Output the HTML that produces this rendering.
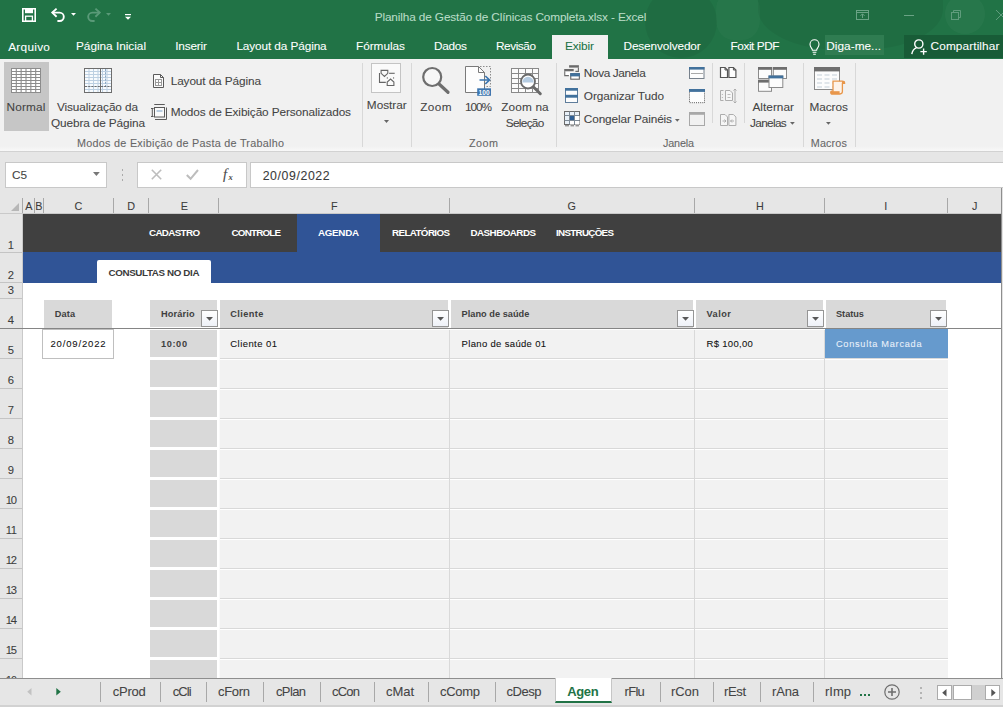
<!DOCTYPE html>
<html><head><meta charset="utf-8"><title>Excel</title>
<style>
*{box-sizing:border-box;margin:0;padding:0}
html,body{width:1003px;height:707px;overflow:hidden;background:#fff}
body{font-family:"Liberation Sans",sans-serif;position:relative;font-size:12px;color:#333}
.a{position:absolute}
.t{position:absolute;white-space:pre;line-height:1;-webkit-text-stroke:0.08px currentColor}
svg{position:absolute;overflow:visible}
.sep{width:1px;background:#d8d8d8;top:63px;height:84px}

</style></head><body>
<!-- ===== title + tab row ===== -->
<div class="a" style="left:0;top:0;width:1003px;height:59px;background:#217346;overflow:hidden">
  <div class="a" style="left:645px;top:-14px;width:72px;height:72px;border-radius:50%;background:rgba(0,0,0,.055)"></div>
  <div class="a" style="left:758px;top:-40px;width:185px;height:90px;border-radius:45%;background:rgba(0,0,0,.05)"></div>
  <div class="a" style="left:716px;top:-10px;width:44px;height:50px;border-radius:40%;background:rgba(255,255,255,.025)"></div>
  <div class="a" style="left:945px;top:-6px;width:40px;height:40px;border-radius:50%;background:rgba(255,255,255,.03)"></div>
</div>
<div class="a" style="left:552px;top:35px;width:56px;height:25px;background:#f1f1f1"></div>
<div class="a" style="left:824.5px;top:35px;width:59.5px;height:20px;background:#2f7c51"></div>
<div class="a" style="left:904px;top:35px;width:99px;height:23px;background:#185c37"></div>
<!-- QAT: save -->
<svg style="left:22px;top:8px" width="14" height="14" viewBox="0 0 14 14"><path d="M0.8 0.8H13.2V13.2H0.8Z" fill="none" stroke="#fff" stroke-width="1.6"/><rect x="3" y="1" width="8" height="4.2" fill="#fff"/><rect x="3.6" y="8.2" width="6.8" height="5" fill="none" stroke="#fff" stroke-width="1.3"/></svg>
<!-- undo -->
<svg style="left:51px;top:8px" width="15" height="14" viewBox="0 0 15 14"><path d="M1.2 4.6H8.6A4.2 4.2 0 0 1 8.6 13H6.4" fill="none" stroke="#fff" stroke-width="1.9"/><path d="M5.6 0.6L1.3 4.6L5.6 8.7" fill="none" stroke="#fff" stroke-width="1.9"/></svg>
<svg style="left:71px;top:13px" width="5" height="3"><path d="M0 0H5L2.5 2.8Z" fill="#fff"/></svg>
<!-- redo (dim) -->
<svg style="left:85.5px;top:8px" width="15" height="14" viewBox="0 0 15 14"><path d="M13.8 4.6H6.4A4.2 4.2 0 0 0 6.4 13H8.6" fill="none" stroke="#5a9a78" stroke-width="1.9"/><path d="M9.4 0.6L13.7 4.6L9.4 8.7" fill="none" stroke="#5a9a78" stroke-width="1.9"/></svg>
<svg style="left:106px;top:13px" width="5" height="3"><path d="M0 0H5L2.5 2.8Z" fill="#5a9a78"/></svg>
<!-- customize -->
<svg style="left:124.5px;top:14px" width="6" height="6"><rect x="0" y="0" width="6" height="1.2" fill="#fff"/><path d="M0 2.8H6L3 5.8Z" fill="#fff"/></svg>
<!-- window controls -->
<svg style="left:856px;top:10px" width="13" height="10" viewBox="0 0 13 10"><rect x="0.5" y="0.5" width="12" height="9" fill="none" stroke="#6aa385" stroke-width="1"/><path d="M0.5 2.5H12.5" stroke="#6aa385"/><path d="M6.5 8V4M4.5 5.8L6.5 3.8L8.5 5.8" fill="none" stroke="#6aa385"/></svg>
<div class="a" style="left:904px;top:14.5px;width:10px;height:1px;background:#6aa385"></div>
<svg style="left:950.5px;top:10px" width="10" height="10" viewBox="0 0 10 10"><rect x="0.5" y="2.5" width="7" height="7" fill="none" stroke="#5f9c7c"/><path d="M2.5 2.5V0.5H9.5V7.5H7.5" fill="none" stroke="#5f9c7c"/></svg>
<svg style="left:996px;top:10px" width="10" height="10" viewBox="0 0 10 10"><path d="M0 0L10 10M10 0L0 10" stroke="#5f9c7c"/></svg>
<!-- bulb -->
<svg style="left:809px;top:38.5px" width="11" height="16" viewBox="0 0 11 16"><path d="M3.4 11.2C3.4 9.4 1 8.4 1 5.3A4.5 4.5 0 0 1 10 5.3C10 8.4 7.6 9.4 7.6 11.2Z" fill="none" stroke="#fff" stroke-width="1.1"/><path d="M3.6 13.2H7.4M4.2 15.2H6.8" stroke="#fff" stroke-width="1.1"/></svg>
<!-- share person -->
<svg style="left:910.5px;top:39px" width="17" height="16" viewBox="0 0 17 16"><circle cx="7.8" cy="5" r="4.1" fill="none" stroke="#fff" stroke-width="1.4"/><path d="M0.8 15.2C1.4 11.4 3.6 9.6 5.4 8.9" fill="none" stroke="#fff" stroke-width="1.4"/><path d="M12.6 9.4V15.8M9.4 12.6H15.8" stroke="#fff" stroke-width="1.4"/></svg>

<!-- ===== ribbon ===== -->
<div class="a" style="left:0;top:59px;width:1003px;height:92px;background:#f1f1f1"></div>
<div class="a" style="left:0;top:146px;width:1003px;height:5px;background:linear-gradient(#f1f1f1,#f8f8f8)"></div>
<div class="a" style="left:0;top:151px;width:1003px;height:1px;background:#d2d2d2"></div>
<div class="a" style="left:0;top:152px;width:1003px;height:45px;background:#e6e6e6"></div>
<div class="a" style="left:4px;top:62px;width:45px;height:69px;background:#c6c6c6"></div>
<!-- separators -->
<div class="a sep" style="left:362px"></div>
<div class="a sep" style="left:411px"></div>
<div class="a sep" style="left:556px"></div>
<div class="a sep" style="left:712px;height:60px"></div>
<div class="a sep" style="left:744px;height:60px"></div>
<div class="a sep" style="left:803px"></div>
<div class="a sep" style="left:855px"></div>
<!-- ===== formula bar ===== -->
<div class="a" style="left:5px;top:162px;width:102px;height:26px;background:#fff;border:1px solid #c8c8c8"></div>
<div class="a" style="left:137px;top:162px;width:110px;height:26px;background:#fff;border:1px solid #c8c8c8"></div>
<div class="a" style="left:250px;top:162px;width:760px;height:26px;background:#fff;border:1px solid #c8c8c8"></div>
<svg style="left:11px;top:68px" width="30" height="25" viewBox="0 0 30 25"><rect x="0" y="0" width="30" height="25" fill="#8c8c8c"/><rect x="1.00" y="1.00" width="3.75" height="2.0" fill="#fff"/><rect x="5.85" y="1.00" width="3.75" height="2.0" fill="#fff"/><rect x="10.70" y="1.00" width="3.75" height="2.0" fill="#fff"/><rect x="15.55" y="1.00" width="3.75" height="2.0" fill="#fff"/><rect x="20.40" y="1.00" width="3.75" height="2.0" fill="#fff"/><rect x="25.25" y="1.00" width="3.75" height="2.0" fill="#fff"/><rect x="1.00" y="4.00" width="3.75" height="2.0" fill="#fff"/><rect x="5.85" y="4.00" width="3.75" height="2.0" fill="#fff"/><rect x="10.70" y="4.00" width="3.75" height="2.0" fill="#fff"/><rect x="15.55" y="4.00" width="3.75" height="2.0" fill="#fff"/><rect x="20.40" y="4.00" width="3.75" height="2.0" fill="#fff"/><rect x="25.25" y="4.00" width="3.75" height="2.0" fill="#fff"/><rect x="1.00" y="7.00" width="3.75" height="2.0" fill="#fff"/><rect x="5.85" y="7.00" width="3.75" height="2.0" fill="#fff"/><rect x="10.70" y="7.00" width="3.75" height="2.0" fill="#fff"/><rect x="15.55" y="7.00" width="3.75" height="2.0" fill="#fff"/><rect x="20.40" y="7.00" width="3.75" height="2.0" fill="#fff"/><rect x="25.25" y="7.00" width="3.75" height="2.0" fill="#fff"/><rect x="1.00" y="10.00" width="3.75" height="2.0" fill="#fff"/><rect x="5.85" y="10.00" width="3.75" height="2.0" fill="#fff"/><rect x="10.70" y="10.00" width="3.75" height="2.0" fill="#fff"/><rect x="15.55" y="10.00" width="3.75" height="2.0" fill="#fff"/><rect x="20.40" y="10.00" width="3.75" height="2.0" fill="#fff"/><rect x="25.25" y="10.00" width="3.75" height="2.0" fill="#fff"/><rect x="1.00" y="13.00" width="3.75" height="2.0" fill="#fff"/><rect x="5.85" y="13.00" width="3.75" height="2.0" fill="#fff"/><rect x="10.70" y="13.00" width="3.75" height="2.0" fill="#fff"/><rect x="15.55" y="13.00" width="3.75" height="2.0" fill="#fff"/><rect x="20.40" y="13.00" width="3.75" height="2.0" fill="#fff"/><rect x="25.25" y="13.00" width="3.75" height="2.0" fill="#fff"/><rect x="1.00" y="16.00" width="3.75" height="2.0" fill="#fff"/><rect x="5.85" y="16.00" width="3.75" height="2.0" fill="#fff"/><rect x="10.70" y="16.00" width="3.75" height="2.0" fill="#fff"/><rect x="15.55" y="16.00" width="3.75" height="2.0" fill="#fff"/><rect x="20.40" y="16.00" width="3.75" height="2.0" fill="#fff"/><rect x="25.25" y="16.00" width="3.75" height="2.0" fill="#fff"/><rect x="1.00" y="19.00" width="3.75" height="2.0" fill="#fff"/><rect x="5.85" y="19.00" width="3.75" height="2.0" fill="#fff"/><rect x="10.70" y="19.00" width="3.75" height="2.0" fill="#fff"/><rect x="15.55" y="19.00" width="3.75" height="2.0" fill="#fff"/><rect x="20.40" y="19.00" width="3.75" height="2.0" fill="#fff"/><rect x="25.25" y="19.00" width="3.75" height="2.0" fill="#fff"/><rect x="1.00" y="22.00" width="3.75" height="2.0" fill="#fff"/><rect x="5.85" y="22.00" width="3.75" height="2.0" fill="#fff"/><rect x="10.70" y="22.00" width="3.75" height="2.0" fill="#fff"/><rect x="15.55" y="22.00" width="3.75" height="2.0" fill="#fff"/><rect x="20.40" y="22.00" width="3.75" height="2.0" fill="#fff"/><rect x="25.25" y="22.00" width="3.75" height="2.0" fill="#fff"/></svg>
<svg style="left:84px;top:68px" width="28" height="25" viewBox="0 0 28 25"><rect x="0.5" y="0.5" width="27" height="24" fill="#f8fbfe" stroke="#6d6d6d"/><path d="M5.00 1V24" stroke="#bdd0e2" stroke-width="1"/><path d="M9.50 1V24" stroke="#bdd0e2" stroke-width="1"/><path d="M14.00 1V24" stroke="#bdd0e2" stroke-width="1"/><path d="M18.50 1V24" stroke="#bdd0e2" stroke-width="1"/><path d="M23.00 1V24" stroke="#bdd0e2" stroke-width="1"/><path d="M1 3.50H27" stroke="#bdd0e2" stroke-width="1"/><path d="M1 6.50H27" stroke="#bdd0e2" stroke-width="1"/><path d="M1 9.50H27" stroke="#bdd0e2" stroke-width="1"/><path d="M1 12.50H27" stroke="#bdd0e2" stroke-width="1"/><path d="M1 15.50H27" stroke="#bdd0e2" stroke-width="1"/><path d="M1 18.50H27" stroke="#bdd0e2" stroke-width="1"/><path d="M1 21.50H27" stroke="#bdd0e2" stroke-width="1"/><path d="M16.5 1V24" stroke="#6d6d6d"/><path d="M1 18.5H27" stroke="#6d6d6d" stroke-dasharray="2 1.2"/><path d="M21.5 1V18" stroke="#8aa8c6" stroke-dasharray="2 1.2"/></svg>
<svg style="left:153px;top:74px" width="11" height="14" viewBox="0 0 11 14"><path d="M0.5 0.5H7.5L10.5 3.5V13.5H0.5Z" fill="#fafafa" stroke="#5a5a5a"/><path d="M7.5 0.5V3.5H10.5" fill="none" stroke="#5a5a5a"/><rect x="2.5" y="5.5" width="6" height="6" fill="#fff" stroke="#9a9a9a"/><path d="M5.5 5.5V11.5M2.5 8.5H8.5" stroke="#9a9a9a"/></svg>
<svg style="left:151px;top:104px" width="16" height="16" viewBox="0 0 16 16"><rect x="3.5" y="3.5" width="10" height="9.5" fill="#fafafa" stroke="#5a5a5a"/><rect x="5.5" y="6" width="6" height="2" fill="#b9cde0"/><path d="M3.5 1V0.5H13.5V1M15.5 3.5V15.5H4" fill="none" stroke="#5a5a5a"/><path d="M0 4.5H2.6M0 12.5H2.6M1.3 4.5V12.5" stroke="#5a5a5a"/></svg>
<div class="a" style="left:371px;top:63px;width:30px;height:30px;background:#fafafa;border:1px solid #c4c4c4"></div>
<svg style="left:378px;top:69px" width="18" height="18" viewBox="0 0 18 18"><path d="M3.1 1.4H9.8V4.3L6.45 7.5L3.1 4.3Z" fill="none" stroke="#666" stroke-width="1.1"/><path d="M11.1 4.3H16.7" stroke="#666" stroke-width="1.1"/><path d="M1.5 4.1V13.4H7.8" fill="none" stroke="#666" stroke-width="1.1"/><path d="M9.2 16.5V13.1L12.55 10.1L15.9 13.1V16.5Z" fill="none" stroke="#666" stroke-width="1.1"/><rect x="8.8" y="8.3" width="1" height="1.3" fill="#666"/><rect x="15.1" y="8.3" width="1" height="1.3" fill="#666"/></svg>
<svg style="left:384px;top:120px" width="5" height="3" viewBox="0 0 5 3"><path d="M0 0H5L2.5 2.9Z" fill="#666"/></svg>
<svg style="left:421px;top:66px" width="30" height="30" viewBox="0 0 30 30"><circle cx="11.2" cy="11" r="9" fill="#f7f7f7" stroke="#6e6e6e" stroke-width="2.2"/><path d="M18.3 18.3L27 26.3" stroke="#6e6e6e" stroke-width="3.2" stroke-linecap="round"/></svg>
<svg style="left:465px;top:66px" width="27" height="31" viewBox="0 0 27 31"><path d="M0.5 0.5H13.5L19.5 6.5V26.5H0.5Z" fill="#fdfdfd" stroke="#7a7a7a"/><path d="M13.5 0.5V6.5H19.5" fill="none" stroke="#7a7a7a"/><path d="M15 0.5H25.5V20.5H20" fill="none" stroke="#8c8c8c" stroke-dasharray="1.5 1.5"/><path d="M14.5 14H24M20.3 10L24.5 14L20.3 18" fill="none" stroke="#3a75b0" stroke-width="1.7"/><path d="M19.5 21V23" stroke="#3a75b0" stroke-dasharray="1 1"/><rect x="12.2" y="22.3" width="13.8" height="7.5" fill="#3e75ae"/><text x="19.1" y="28.6" font-family="Liberation Sans,sans-serif" font-weight="bold" font-size="6.6" fill="#fff" text-anchor="middle">100</text></svg>
<svg style="left:511px;top:68px" width="31" height="28" viewBox="0 0 31 28"><rect x="0.5" y="0.5" width="27" height="24" fill="#fcfcfc" stroke="#8a8a8a"/><path d="M7.5 1V24" stroke="#8a8a8a"/><path d="M14.5 1V24" stroke="#8a8a8a"/><path d="M21.5 1V24" stroke="#8a8a8a"/><path d="M1 5.5H27" stroke="#8a8a8a"/><path d="M1 10.5H27" stroke="#8a8a8a"/><path d="M1 15.5H27" stroke="#8a8a8a"/><path d="M1 20.5H27" stroke="#8a8a8a"/><circle cx="17" cy="13.5" r="7" fill="#fff" stroke="#6a6a6a" stroke-width="1.8"/><path d="M11.3 14.5A5.7 5.7 0 0 1 22.7 14.5Z" fill="#b5cce2"/><path d="M22.5 19L29.3 25.7" stroke="#6a6a6a" stroke-width="3" stroke-linecap="round"/></svg>
<svg style="left:564px;top:65px" width="16" height="15" viewBox="0 0 16 15"><rect x="5.1" y="0.2" width="9.8" height="2.4" fill="#6b6b6b"/><path d="M14.4 2.6V6.4H11.4" fill="none" stroke="#6b6b6b" stroke-width="1.1"/><rect x="0.7" y="5" width="8.8" height="5.6" fill="#fff"/><rect x="0.2" y="4" width="9.5" height="2.3" fill="#6b6b6b"/><path d="M0.75 6.3V10.6H4.9" fill="none" stroke="#6b6b6b" stroke-width="1.1"/><rect x="6.75" y="8.7" width="8.6" height="5.5" fill="#fff" stroke="#666" stroke-width="1.1"/><rect x="6.2" y="8.1" width="9.7" height="3.3" fill="#41719c"/></svg>
<svg style="left:565px;top:88px" width="13" height="15" viewBox="0 0 13 15"><rect x="0.5" y="0.5" width="12" height="14" fill="#fdfdfd" stroke="#5f7d9b"/><rect x="0" y="0" width="13" height="2.7" fill="#41719c"/><rect x="0" y="6.8" width="13" height="2.9" fill="#41719c"/></svg>
<svg style="left:564px;top:111px" width="16" height="16" viewBox="0 0 16 16"><rect x="0.5" y="0.5" width="15" height="13" fill="#e8f0f8" stroke="#6b6b6b"/><path d="M5.5 0.5V13.5M10.5 0.5V13.5M0.5 4.5H15.5M0.5 9.5H15.5" stroke="#7d8a96"/><rect x="6" y="5" width="4" height="4" fill="#2f5f95"/><rect x="11" y="5" width="4.5" height="4" fill="#fff"/><rect x="6" y="10" width="4" height="3.5" fill="#fff"/><rect x="11" y="10" width="4.5" height="3.5" fill="#fff"/><path d="M1 14.8H5M6.5 14.8H10M11.5 14.8H15" stroke="#6b6b6b"/></svg>
<svg style="left:674.5px;top:118.7px" width="5" height="3" viewBox="0 0 5 3"><path d="M0 0H4.6L2.3 2.7Z" fill="#666"/></svg>
<svg style="left:689px;top:67px" width="16" height="12" viewBox="0 0 16 12"><rect x="0.5" y="0.5" width="14.5" height="11" fill="#fdfdfd" stroke="#77818c"/><rect x="0" y="0" width="15.5" height="2.6" fill="#41719c"/><path d="M2.5 6.5H13.5" stroke="#555" stroke-dasharray="1 1"/></svg>
<svg style="left:689px;top:89px" width="17" height="15" viewBox="0 0 17 15"><rect x="0.5" y="0.5" width="15" height="13.2" fill="#fdfdfd" stroke="#555" stroke-dasharray="1 1.1"/><rect x="0" y="0" width="16" height="2.9" fill="#41719c"/></svg>
<svg style="left:689px;top:112px" width="17" height="14" viewBox="0 0 17 14"><rect x="0.5" y="0.5" width="15" height="13" fill="#f1f1f1" stroke="#a8a8a8"/><rect x="0" y="0" width="16" height="2.8" fill="#a8a8a8"/></svg>
<svg style="left:720px;top:67px" width="17" height="11" viewBox="0 0 17 11"><path d="M0.5 0.5H5L7.5 3V10.5H0.5Z" fill="#fdfdfd" stroke="#555" stroke-width="1.2"/><path d="M5 0.5V3H7.5" fill="none" stroke="#555"/><path d="M8.9 0.5H13.4L15.9 3V10.5H8.9Z" fill="#fdfdfd" stroke="#555" stroke-width="1.2"/><path d="M13.4 0.5V3H15.9" fill="none" stroke="#555"/></svg>
<svg style="left:720px;top:88px" width="18" height="16" viewBox="0 0 18 16"><path d="M3.5 2.5H0.5V12.5H3.5" fill="none" stroke="#adadad"/><path d="M5.5 2.5H10L12.5 5V12.5H5.5Z" fill="#f6f6f6" stroke="#adadad"/><path d="M7.5 6.5H10.5M7.5 9.5H10.5M1.8 6.5H3M1.8 9.5H3" stroke="#bcbcbc"/><path d="M15 1V15M13.5 2.5L15 1L16.5 2.5M13.5 13.5L15 15L16.5 13.5" fill="none" stroke="#adadad"/></svg>
<svg style="left:720px;top:114px" width="17" height="12" viewBox="0 0 17 12"><path d="M0.5 0.5H5L7.5 3V11.5H0.5Z" fill="#f6f6f6" stroke="#adadad"/><path d="M8.9 0.5H13.4L15.9 3V11.5H8.9Z" fill="#f6f6f6" stroke="#adadad"/><path d="M2.5 7H6M4.5 5.5L6 7L4.5 8.5M14 7H10.5M12 5.5L10.5 7L12 8.5" fill="none" stroke="#adadad"/></svg>
<svg style="left:758px;top:67px" width="30" height="25" viewBox="0 0 30 25"><rect x="0.5" y="0.5" width="13" height="11" fill="#fcfcfc" stroke="#8a8a8a"/><rect x="0" y="0" width="14" height="2.8" fill="#6e6e6e"/><rect x="15.3" y="0.5" width="13.2" height="11" fill="#fcfcfc" stroke="#8a8a8a"/><rect x="14.8" y="0" width="14.2" height="2.8" fill="#6e6e6e"/><rect x="0.5" y="13.3" width="13" height="11" fill="#fcfcfc" stroke="#8a8a8a"/><rect x="0" y="12.8" width="14" height="2.8" fill="#6e6e6e"/><rect x="11" y="9" width="13.8" height="11.5" fill="#fcfcfc" stroke="#8a8a8a"/><rect x="10.5" y="8.5" width="14.8" height="2.9" fill="#41719c"/></svg>
<svg style="left:790px;top:121.7px" width="5" height="3" viewBox="0 0 5 3"><path d="M0 0H4.8L2.4 2.7Z" fill="#666"/></svg>
<svg style="left:814px;top:67px" width="32" height="28" viewBox="0 0 32 28"><rect x="0.5" y="0.5" width="25" height="22" fill="#fcfcfc" stroke="#8a8a8a"/><rect x="0" y="0" width="26" height="4.4" fill="#6e6e6e"/><path d="M3 8H8M10.5 8H15.5M18 8H23" stroke="#c4cfd8"/><path d="M3 12H8M10.5 12H15.5M18 12H23" stroke="#c4cfd8"/><path d="M3 16H8M10.5 16H15.5M18 16H23" stroke="#c4cfd8"/><path d="M3 20H8M10.5 20H15.5M18 20H23" stroke="#c4cfd8"/><path d="M19 14.2H28.2C30 14.2 30.6 15 30.6 16.4H28.4V24.6C28.4 26.4 27.6 27 26 27H17.6C16.4 27 16.4 24.2 17.6 24.2H19Z" fill="#fdf3ea" stroke="#e8964a" stroke-width="1.3"/><rect x="17" y="24.2" width="8.6" height="2.9" fill="#e8964a"/><rect x="28" y="14.2" width="2.6" height="2.2" fill="#e8964a"/></svg>
<svg style="left:826px;top:122px" width="5" height="3" viewBox="0 0 5 3"><path d="M0 0H4.8L2.4 2.7Z" fill="#666"/></svg>
<svg style="left:93px;top:172px" width="7" height="4" viewBox="0 0 7 4"><path d="M0 0H6.8L3.4 3.9Z" fill="#777"/></svg>
<div class="a" style="left:121.5px;top:169px;width:1.6px;height:1.6px;background:#aaa"></div>
<div class="a" style="left:121.5px;top:174px;width:1.6px;height:1.6px;background:#aaa"></div>
<div class="a" style="left:121.5px;top:179px;width:1.6px;height:1.6px;background:#aaa"></div>
<svg style="left:151px;top:169px" width="11" height="11" viewBox="0 0 11 11"><path d="M0.8 0.8L10.2 10.2M10.2 0.8L0.8 10.2" stroke="#bdbdbd" stroke-width="1.6"/></svg>
<svg style="left:186px;top:169px" width="13" height="11" viewBox="0 0 13 11"><path d="M0.8 6L4.6 9.8L12 1" fill="none" stroke="#bdbdbd" stroke-width="2"/></svg>
<!-- ===== grid ===== -->
<div class="a" style="left:0px;top:197px;width:1003px;height:17px;background:#e6e6e6;"></div>
<div class="a" style="left:0px;top:197px;width:22px;height:481px;background:#e6e6e6;"></div>
<div class="a" style="left:22px;top:198px;width:1px;height:15px;background:#a8a8a8;"></div>
<div class="a" style="left:34px;top:198px;width:1px;height:15px;background:#a8a8a8;"></div>
<div class="a" style="left:43px;top:198px;width:1px;height:15px;background:#a8a8a8;"></div>
<div class="a" style="left:113px;top:198px;width:1px;height:15px;background:#a8a8a8;"></div>
<div class="a" style="left:148px;top:198px;width:1px;height:15px;background:#a8a8a8;"></div>
<div class="a" style="left:218px;top:198px;width:1px;height:15px;background:#a8a8a8;"></div>
<div class="a" style="left:449px;top:198px;width:1px;height:15px;background:#a8a8a8;"></div>
<div class="a" style="left:694px;top:198px;width:1px;height:15px;background:#a8a8a8;"></div>
<div class="a" style="left:824px;top:198px;width:1px;height:15px;background:#a8a8a8;"></div>
<div class="a" style="left:947px;top:198px;width:1px;height:15px;background:#a8a8a8;"></div>
<div class="a" style="left:22px;top:213px;width:981px;height:1px;background:#c9c9c9;"></div>
<div class="a" style="left:22px;top:214px;width:1px;height:464px;background:#c9c9c9;"></div>
<div class="a" style="left:0px;top:213px;width:22px;height:1px;background:#c9c9c9;"></div>
<div class="a" style="left:0px;top:252px;width:22px;height:1px;background:#c4c4c4;"></div>
<div class="a" style="left:0px;top:282px;width:22px;height:1px;background:#c4c4c4;"></div>
<div class="a" style="left:0px;top:298px;width:22px;height:1px;background:#c4c4c4;"></div>
<div class="a" style="left:0px;top:358px;width:22px;height:1px;background:#c4c4c4;"></div>
<div class="a" style="left:0px;top:388px;width:22px;height:1px;background:#c4c4c4;"></div>
<div class="a" style="left:0px;top:418px;width:22px;height:1px;background:#c4c4c4;"></div>
<div class="a" style="left:0px;top:448px;width:22px;height:1px;background:#c4c4c4;"></div>
<div class="a" style="left:0px;top:478px;width:22px;height:1px;background:#c4c4c4;"></div>
<div class="a" style="left:0px;top:508px;width:22px;height:1px;background:#c4c4c4;"></div>
<div class="a" style="left:0px;top:538px;width:22px;height:1px;background:#c4c4c4;"></div>
<div class="a" style="left:0px;top:568px;width:22px;height:1px;background:#c4c4c4;"></div>
<div class="a" style="left:0px;top:598px;width:22px;height:1px;background:#c4c4c4;"></div>
<div class="a" style="left:0px;top:628px;width:22px;height:1px;background:#c4c4c4;"></div>
<div class="a" style="left:0px;top:658px;width:22px;height:1px;background:#c4c4c4;"></div>
<div class="a" style="left:0px;top:688px;width:22px;height:1px;background:#c4c4c4;"></div>
<svg style="left:11px;top:202.5px" width="8" height="8"><path d="M8 0V8H0Z" fill="#b7b7b7"/></svg>
<div class="a" style="left:23px;top:214px;width:978px;height:38px;background:#404040;"></div>
<div class="a" style="left:297px;top:214px;width:83px;height:38px;background:#305496;"></div>
<div class="a" style="left:23px;top:252px;width:978px;height:31px;background:#305496;"></div>
<div class="a" style="left:97px;top:260px;width:114px;height:23px;background:#fff;border-radius:2px 2px 0 0"></div>
<div class="a" style="left:1001px;top:188px;width:1px;height:490px;background:#8e8e8e;"></div>
<div class="a" style="left:1002px;top:188px;width:1px;height:490px;background:#e2e2e2;"></div>
<div class="a" style="left:44px;top:300px;width:68px;height:28px;background:#d9d9d9;"></div>
<div class="a" style="left:150px;top:300px;width:67px;height:27px;background:#d9d9d9;"></div>
<div class="a" style="left:220px;top:300px;width:228px;height:28px;background:#d9d9d9;"></div>
<div class="a" style="left:451px;top:300px;width:242px;height:28px;background:#d9d9d9;"></div>
<div class="a" style="left:696px;top:300px;width:127px;height:28px;background:#d9d9d9;"></div>
<div class="a" style="left:826px;top:300px;width:120px;height:28px;background:#d9d9d9;"></div>
<div class="a" style="left:150px;top:330px;width:67px;height:27px;background:#d9d9d9;"></div>
<div class="a" style="left:219px;top:330px;width:729px;height:29px;background:#f2f2f2;border-bottom:1px solid #d9d9d9"></div>
<div class="a" style="left:150px;top:360px;width:67px;height:27px;background:#d9d9d9;"></div>
<div class="a" style="left:219px;top:360px;width:729px;height:29px;background:#f2f2f2;border-bottom:1px solid #d9d9d9"></div>
<div class="a" style="left:150px;top:390px;width:67px;height:27px;background:#d9d9d9;"></div>
<div class="a" style="left:219px;top:390px;width:729px;height:29px;background:#f2f2f2;border-bottom:1px solid #d9d9d9"></div>
<div class="a" style="left:150px;top:420px;width:67px;height:27px;background:#d9d9d9;"></div>
<div class="a" style="left:219px;top:420px;width:729px;height:29px;background:#f2f2f2;border-bottom:1px solid #d9d9d9"></div>
<div class="a" style="left:150px;top:450px;width:67px;height:27px;background:#d9d9d9;"></div>
<div class="a" style="left:219px;top:450px;width:729px;height:29px;background:#f2f2f2;border-bottom:1px solid #d9d9d9"></div>
<div class="a" style="left:150px;top:480px;width:67px;height:27px;background:#d9d9d9;"></div>
<div class="a" style="left:219px;top:480px;width:729px;height:29px;background:#f2f2f2;border-bottom:1px solid #d9d9d9"></div>
<div class="a" style="left:150px;top:510px;width:67px;height:27px;background:#d9d9d9;"></div>
<div class="a" style="left:219px;top:510px;width:729px;height:29px;background:#f2f2f2;border-bottom:1px solid #d9d9d9"></div>
<div class="a" style="left:150px;top:540px;width:67px;height:27px;background:#d9d9d9;"></div>
<div class="a" style="left:219px;top:540px;width:729px;height:29px;background:#f2f2f2;border-bottom:1px solid #d9d9d9"></div>
<div class="a" style="left:150px;top:570px;width:67px;height:27px;background:#d9d9d9;"></div>
<div class="a" style="left:219px;top:570px;width:729px;height:29px;background:#f2f2f2;border-bottom:1px solid #d9d9d9"></div>
<div class="a" style="left:150px;top:600px;width:67px;height:27px;background:#d9d9d9;"></div>
<div class="a" style="left:219px;top:600px;width:729px;height:29px;background:#f2f2f2;border-bottom:1px solid #d9d9d9"></div>
<div class="a" style="left:150px;top:630px;width:67px;height:27px;background:#d9d9d9;"></div>
<div class="a" style="left:219px;top:630px;width:729px;height:29px;background:#f2f2f2;border-bottom:1px solid #d9d9d9"></div>
<div class="a" style="left:150px;top:660px;width:67px;height:27px;background:#d9d9d9;"></div>
<div class="a" style="left:219px;top:660px;width:729px;height:29px;background:#f2f2f2;border-bottom:1px solid #d9d9d9"></div>
<div class="a" style="left:449px;top:330px;width:1px;height:348px;background:#d9d9d9;"></div>
<div class="a" style="left:694px;top:330px;width:1px;height:348px;background:#d9d9d9;"></div>
<div class="a" style="left:824px;top:330px;width:1px;height:348px;background:#d9d9d9;"></div>
<div class="a" style="left:219px;top:330px;width:1px;height:348px;background:#fafafa;"></div>
<div class="a" style="left:825px;top:328.5px;width:123px;height:29.5px;background:#669acd;"></div>
<div class="a" style="left:42px;top:329px;width:72px;height:30px;background:#fff;border:1px solid #bfbfbf"></div>
<div class="a" style="left:0px;top:328px;width:1001px;height:1px;background:#858585;"></div>
<div class="a" style="left:201px;top:310px;width:17px;height:17px;background:linear-gradient(#fff,#eef1f8);border:1px solid #959595"></div>
<svg style="left:205px;top:317px" width="9" height="5"><path d="M1.1 0.1H8L4.55 3.8Z" fill="#585858"/></svg>
<div class="a" style="left:432px;top:310px;width:17px;height:17px;background:linear-gradient(#fff,#eef1f8);border:1px solid #959595"></div>
<svg style="left:436px;top:317px" width="9" height="5"><path d="M1.1 0.1H8L4.55 3.8Z" fill="#585858"/></svg>
<div class="a" style="left:677px;top:310px;width:17px;height:17px;background:linear-gradient(#fff,#eef1f8);border:1px solid #959595"></div>
<svg style="left:681px;top:317px" width="9" height="5"><path d="M1.1 0.1H8L4.55 3.8Z" fill="#585858"/></svg>
<div class="a" style="left:807px;top:310px;width:17px;height:17px;background:linear-gradient(#fff,#eef1f8);border:1px solid #959595"></div>
<svg style="left:811px;top:317px" width="9" height="5"><path d="M1.1 0.1H8L4.55 3.8Z" fill="#585858"/></svg>
<div class="a" style="left:930px;top:310px;width:17px;height:17px;background:linear-gradient(#fff,#eef1f8);border:1px solid #959595"></div>
<svg style="left:934px;top:317px" width="9" height="5"><path d="M1.1 0.1H8L4.55 3.8Z" fill="#585858"/></svg>
<div class="t" style="left:374.70px;top:12.01px;font-size:11.8px;color:#b9dcc6;letter-spacing:-0.126px">Planilha de Gestão de Clínicas Completa.xlsx - Excel</div>
<div class="t" style="left:8.20px;top:42.31px;font-size:11.8px;color:#ffffff;letter-spacing:0.283px">Arquivo</div>
<div class="t" style="left:76.00px;top:41.41px;font-size:11.8px;color:#ffffff;letter-spacing:-0.013px">Página Inicial</div>
<div class="t" style="left:175.20px;top:41.41px;font-size:11.8px;color:#ffffff;letter-spacing:-0.180px">Inserir</div>
<div class="t" style="left:236.40px;top:41.41px;font-size:11.8px;color:#ffffff;letter-spacing:-0.103px">Layout da Página</div>
<div class="t" style="left:356.00px;top:41.41px;font-size:11.8px;color:#ffffff;letter-spacing:-0.025px">Fórmulas</div>
<div class="t" style="left:434.00px;top:41.41px;font-size:11.8px;color:#ffffff;letter-spacing:-0.277px">Dados</div>
<div class="t" style="left:496.00px;top:41.41px;font-size:11.8px;color:#ffffff;letter-spacing:-0.438px">Revisão</div>
<div class="t" style="left:565.00px;top:41.41px;font-size:11.8px;color:#217346;letter-spacing:-0.100px">Exibir</div>
<div class="t" style="left:623.50px;top:41.41px;font-size:11.8px;color:#ffffff;letter-spacing:-0.125px">Desenvolvedor</div>
<div class="t" style="left:730.60px;top:41.41px;font-size:11.8px;color:#ffffff;letter-spacing:-0.442px">Foxit PDF</div>
<div class="t" style="left:826.30px;top:41.41px;font-size:11.8px;color:#ffffff;letter-spacing:0.031px">Diga-me...</div>
<div class="t" style="left:930.60px;top:41.41px;font-size:11.8px;color:#ffffff;letter-spacing:0.115px">Compartilhar</div>
<div class="t" style="left:6.50px;top:102.41px;font-size:11.8px;color:#444444;letter-spacing:0.194px">Normal</div>
<div class="t" style="left:57.00px;top:102.41px;font-size:11.8px;color:#444444;letter-spacing:-0.102px">Visualização da</div>
<div class="t" style="left:51.00px;top:118.41px;font-size:11.8px;color:#444444;letter-spacing:-0.118px">Quebra de Página</div>
<div class="t" style="left:170.70px;top:76.41px;font-size:11.8px;color:#444444;letter-spacing:-0.103px">Layout da Página</div>
<div class="t" style="left:170.70px;top:107.01px;font-size:11.8px;color:#444444;letter-spacing:-0.107px">Modos de Exibição Personalizados</div>
<div class="t" style="left:77.00px;top:138.46px;font-size:10.8px;color:#666;letter-spacing:0.274px">Modos de Exibição de Pasta de Trabalho</div>
<div class="t" style="left:366.80px;top:100.31px;font-size:11.8px;color:#444444;letter-spacing:0.003px">Mostrar</div>
<div class="t" style="left:420.30px;top:102.41px;font-size:11.8px;color:#444444;letter-spacing:0.348px">Zoom</div>
<div class="t" style="left:465.00px;top:102.41px;font-size:11.8px;color:#444444;letter-spacing:-1.062px">100%</div>
<div class="t" style="left:501.20px;top:102.41px;font-size:11.8px;color:#444444;letter-spacing:0.156px">Zoom na</div>
<div class="t" style="left:505.80px;top:118.21px;font-size:11.8px;color:#444444;letter-spacing:-0.690px">Seleção</div>
<div class="t" style="left:469.00px;top:138.46px;font-size:10.8px;color:#666;letter-spacing:0.464px">Zoom</div>
<div class="t" style="left:583.80px;top:68.41px;font-size:11.8px;color:#444444;letter-spacing:-0.369px">Nova Janela</div>
<div class="t" style="left:583.80px;top:91.41px;font-size:11.8px;color:#444444;letter-spacing:-0.086px">Organizar Tudo</div>
<div class="t" style="left:583.80px;top:114.31px;font-size:11.8px;color:#444444;letter-spacing:-0.110px">Congelar Painéis</div>
<div class="t" style="left:752.40px;top:102.41px;font-size:11.8px;color:#444444;letter-spacing:0.041px">Alternar</div>
<div class="t" style="left:750.00px;top:118.11px;font-size:11.8px;color:#444444;letter-spacing:-0.662px">Janelas</div>
<div class="t" style="left:663.00px;top:138.46px;font-size:10.8px;color:#666;letter-spacing:-0.166px">Janela</div>
<div class="t" style="left:809.60px;top:102.41px;font-size:11.8px;color:#444444;letter-spacing:-0.098px">Macros</div>
<div class="t" style="left:810.80px;top:138.16px;font-size:10.8px;color:#666;letter-spacing:0.119px">Macros</div>
<div class="t" style="left:12.00px;top:170.11px;font-size:11.8px;color:#444;letter-spacing:-0.094px">C5</div>
<div class="t" style="left:262.70px;top:169.99px;font-size:12.3px;color:#3a3a3a;letter-spacing:0.595px">20/09/2022</div>
<div class="t" style="left:222.98px;top:167.47px;font-size:14.5px;color:#4a4a4a;letter-spacing:0.000px;font-style:italic;font-family:'Liberation Serif',serif">f</div>
<div class="t" style="left:228.62px;top:172.94px;font-size:8.5px;color:#4a4a4a;letter-spacing:0.000px;font-weight:bold;-webkit-text-stroke:0;font-style:italic;font-family:'Liberation Serif',serif">x</div>
<div class="t" style="left:25.15px;top:201.06px;font-size:10.8px;color:#3c3c3c;letter-spacing:0.000px">A</div>
<div class="t" style="left:35.15px;top:201.06px;font-size:10.8px;color:#3c3c3c;letter-spacing:0.000px">B</div>
<div class="t" style="left:74.39px;top:201.06px;font-size:10.8px;color:#3c3c3c;letter-spacing:0.000px">C</div>
<div class="t" style="left:127.29px;top:201.06px;font-size:10.8px;color:#3c3c3c;letter-spacing:0.000px">D</div>
<div class="t" style="left:180.75px;top:201.06px;font-size:10.8px;color:#3c3c3c;letter-spacing:0.000px">E</div>
<div class="t" style="left:331.10px;top:201.06px;font-size:10.8px;color:#3c3c3c;letter-spacing:0.000px">F</div>
<div class="t" style="left:567.55px;top:201.06px;font-size:10.8px;color:#3c3c3c;letter-spacing:0.000px">G</div>
<div class="t" style="left:756.09px;top:201.06px;font-size:10.8px;color:#3c3c3c;letter-spacing:0.000px">H</div>
<div class="t" style="left:884.30px;top:201.06px;font-size:10.8px;color:#3c3c3c;letter-spacing:0.000px">I</div>
<div class="t" style="left:971.90px;top:201.06px;font-size:10.8px;color:#3c3c3c;letter-spacing:0.000px">J</div>
<div class="t" style="left:7.68px;top:239.72px;font-size:11.2px;color:#3c3c3c;letter-spacing:0.000px">1</div>
<div class="t" style="left:7.68px;top:269.72px;font-size:11.2px;color:#3c3c3c;letter-spacing:0.000px">2</div>
<div class="t" style="left:7.68px;top:284.92px;font-size:11.2px;color:#3c3c3c;letter-spacing:0.000px">3</div>
<div class="t" style="left:7.68px;top:314.72px;font-size:11.2px;color:#3c3c3c;letter-spacing:0.000px">4</div>
<div class="t" style="left:7.68px;top:344.82px;font-size:11.2px;color:#3c3c3c;letter-spacing:0.000px">5</div>
<div class="t" style="left:7.68px;top:374.82px;font-size:11.2px;color:#3c3c3c;letter-spacing:0.000px">6</div>
<div class="t" style="left:7.68px;top:404.82px;font-size:11.2px;color:#3c3c3c;letter-spacing:0.000px">7</div>
<div class="t" style="left:7.68px;top:434.82px;font-size:11.2px;color:#3c3c3c;letter-spacing:0.000px">8</div>
<div class="t" style="left:7.68px;top:464.82px;font-size:11.2px;color:#3c3c3c;letter-spacing:0.000px">9</div>
<div class="t" style="left:5.70px;top:494.82px;font-size:11.2px;color:#3c3c3c;letter-spacing:-1.153px">10</div>
<div class="t" style="left:5.70px;top:524.82px;font-size:11.2px;color:#3c3c3c;letter-spacing:-0.325px">11</div>
<div class="t" style="left:5.70px;top:554.82px;font-size:11.2px;color:#3c3c3c;letter-spacing:-1.153px">12</div>
<div class="t" style="left:5.70px;top:584.82px;font-size:11.2px;color:#3c3c3c;letter-spacing:-1.153px">13</div>
<div class="t" style="left:5.70px;top:614.82px;font-size:11.2px;color:#3c3c3c;letter-spacing:-1.153px">14</div>
<div class="t" style="left:5.70px;top:644.82px;font-size:11.2px;color:#3c3c3c;letter-spacing:-1.153px">15</div>
<div class="t" style="left:5.70px;top:674.82px;font-size:11.2px;color:#3c3c3c;letter-spacing:-1.153px">16</div>
<div class="t" style="left:149.00px;top:228.30px;font-size:9.8px;color:#ffffff;letter-spacing:-0.645px;font-weight:bold;-webkit-text-stroke:0">CADASTRO</div>
<div class="t" style="left:231.50px;top:228.30px;font-size:9.8px;color:#ffffff;letter-spacing:-0.781px;font-weight:bold;-webkit-text-stroke:0">CONTROLE</div>
<div class="t" style="left:318.00px;top:228.30px;font-size:9.8px;color:#ffffff;letter-spacing:-0.294px;font-weight:bold;-webkit-text-stroke:0">AGENDA</div>
<div class="t" style="left:392.00px;top:228.30px;font-size:9.8px;color:#ffffff;letter-spacing:-0.611px;font-weight:bold;-webkit-text-stroke:0">RELATÓRIOS</div>
<div class="t" style="left:470.50px;top:228.30px;font-size:9.8px;color:#ffffff;letter-spacing:-0.524px;font-weight:bold;-webkit-text-stroke:0">DASHBOARDS</div>
<div class="t" style="left:556.00px;top:228.30px;font-size:9.8px;color:#ffffff;letter-spacing:-0.693px;font-weight:bold;-webkit-text-stroke:0">INSTRUÇÕES</div>
<div class="t" style="left:108.50px;top:267.50px;font-size:9.8px;color:#3a3a3a;letter-spacing:-0.368px;font-weight:bold;-webkit-text-stroke:0">CONSULTAS NO DIA</div>
<div class="t" style="left:54.80px;top:309.91px;font-size:9.2px;color:#404040;letter-spacing:0.093px;font-weight:bold;-webkit-text-stroke:0">Data</div>
<div class="t" style="left:160.90px;top:309.91px;font-size:9.2px;color:#404040;letter-spacing:0.185px;font-weight:bold;-webkit-text-stroke:0">Horário</div>
<div class="t" style="left:230.30px;top:309.91px;font-size:9.2px;color:#404040;letter-spacing:0.393px;font-weight:bold;-webkit-text-stroke:0">Cliente</div>
<div class="t" style="left:461.60px;top:309.91px;font-size:9.2px;color:#404040;letter-spacing:0.023px;font-weight:bold;-webkit-text-stroke:0">Plano de saúde</div>
<div class="t" style="left:706.50px;top:309.91px;font-size:9.2px;color:#404040;letter-spacing:0.454px;font-weight:bold;-webkit-text-stroke:0">Valor</div>
<div class="t" style="left:836.00px;top:309.91px;font-size:9.2px;color:#404040;letter-spacing:-0.019px;font-weight:bold;-webkit-text-stroke:0">Status</div>
<div class="t" style="left:50.40px;top:339.46px;font-size:9.5px;color:#111;letter-spacing:0.850px">20/09/2022</div>
<div class="t" style="left:160.90px;top:339.71px;font-size:9.2px;color:#404040;letter-spacing:0.650px;font-weight:bold;-webkit-text-stroke:0">10:00</div>
<div class="t" style="left:230.30px;top:339.46px;font-size:9.5px;color:#111;letter-spacing:0.435px">Cliente 01</div>
<div class="t" style="left:461.60px;top:339.46px;font-size:9.5px;color:#111;letter-spacing:0.329px">Plano de saúde 01</div>
<div class="t" style="left:706.50px;top:339.46px;font-size:9.5px;color:#111;letter-spacing:0.307px">R$ 100,00</div>
<div class="t" style="left:836.00px;top:339.71px;font-size:9.2px;color:#e8f0fa;letter-spacing:0.729px">Consulta Marcada</div>
<!-- ===== sheet tabs ===== -->
<div class="a" style="left:0;top:678px;width:1003px;height:29px;background:#e6e6e6;border-top:1px solid #8e8e8e"></div>
<div class="a" style="left:0;top:705px;width:1003px;height:2px;background:#d2d2d2"></div>
<div class="a" style="left:555px;top:678px;width:57px;height:25px;background:#fff;border-bottom:2px solid #217346;border-left:1px solid #c6c6c6;border-right:1px solid #c6c6c6"></div>
<div class="a" style="left:100px;top:682px;width:1px;height:20px;background:#a8a8a8"></div>
<div class="a" style="left:159.5px;top:682px;width:1px;height:20px;background:#a8a8a8"></div>
<div class="a" style="left:205.5px;top:682px;width:1px;height:20px;background:#a8a8a8"></div>
<div class="a" style="left:263px;top:682px;width:1px;height:20px;background:#a8a8a8"></div>
<div class="a" style="left:320px;top:682px;width:1px;height:20px;background:#a8a8a8"></div>
<div class="a" style="left:374px;top:682px;width:1px;height:20px;background:#a8a8a8"></div>
<div class="a" style="left:428px;top:682px;width:1px;height:20px;background:#a8a8a8"></div>
<div class="a" style="left:494.5px;top:682px;width:1px;height:20px;background:#a8a8a8"></div>
<div class="a" style="left:659.5px;top:682px;width:1px;height:20px;background:#a8a8a8"></div>
<div class="a" style="left:712.5px;top:682px;width:1px;height:20px;background:#a8a8a8"></div>
<div class="a" style="left:760px;top:682px;width:1px;height:20px;background:#a8a8a8"></div>
<div class="a" style="left:812.5px;top:682px;width:1px;height:20px;background:#a8a8a8"></div>
<svg style="left:27px;top:688px" width="5" height="8"><path d="M4.5 0V7.6L0.2 3.8Z" fill="#c2c2c2"/></svg>
<svg style="left:55.5px;top:688px" width="5" height="8"><path d="M0.3 0V7.6L4.8 3.8Z" fill="#217346"/></svg>
<svg style="left:884px;top:684px" width="16" height="16" viewBox="0 0 16 16"><circle cx="8" cy="8" r="7.2" fill="none" stroke="#6e6e6e" stroke-width="1.2"/><path d="M8 4V12M4 8H12" stroke="#6e6e6e" stroke-width="1.6"/></svg>
<div class="a" style="left:920px;top:687px;width:2px;height:2px;background:#b4b4b4"></div>
<div class="a" style="left:920px;top:692px;width:2px;height:2px;background:#b4b4b4"></div>
<div class="a" style="left:920px;top:697px;width:2px;height:2px;background:#b4b4b4"></div>
<div class="a" style="left:937px;top:685px;width:15px;height:15px;background:#fff;border:1px solid #ababab"></div>
<svg style="left:941.5px;top:689px" width="5" height="8"><path d="M4.5 0V7.4L0.2 3.7Z" fill="#555"/></svg>
<div class="a" style="left:952px;top:685px;width:33px;height:15px;background:#d0d0d0"></div>
<div class="a" style="left:952.5px;top:685px;width:19.5px;height:15px;background:#fff;border:1px solid #ababab"></div>
<div class="a" style="left:985px;top:685px;width:15px;height:15px;background:#fff;border:1px solid #ababab"></div>
<svg style="left:990.5px;top:689px" width="5" height="8"><path d="M0.3 0V7.4L4.7 3.7Z" fill="#555"/></svg>
<div class="a" style="left:860px;top:694.3px;width:2px;height:2px;background:#217346"></div>
<div class="a" style="left:864px;top:694.3px;width:2px;height:2px;background:#217346"></div>
<div class="a" style="left:868px;top:694.3px;width:2px;height:2px;background:#217346"></div>

<div class="t" style="left:112.70px;top:685.30px;font-size:13px;color:#444;letter-spacing:-0.217px">cProd</div>
<div class="t" style="left:172.80px;top:685.30px;font-size:13px;color:#444;letter-spacing:-0.924px">cCli</div>
<div class="t" style="left:218.00px;top:685.30px;font-size:13px;color:#444;letter-spacing:-0.309px">cForn</div>
<div class="t" style="left:276.00px;top:685.30px;font-size:13px;color:#444;letter-spacing:-0.633px">cPlan</div>
<div class="t" style="left:332.00px;top:685.30px;font-size:13px;color:#444;letter-spacing:-0.786px">cCon</div>
<div class="t" style="left:386.00px;top:685.30px;font-size:13px;color:#444;letter-spacing:-0.057px">cMat</div>
<div class="t" style="left:440.00px;top:685.30px;font-size:13px;color:#444;letter-spacing:-0.297px">cComp</div>
<div class="t" style="left:506.50px;top:685.30px;font-size:13px;color:#444;letter-spacing:-0.465px">cDesp</div>
<div class="t" style="left:624.60px;top:685.30px;font-size:13px;color:#444;letter-spacing:-0.730px">rFlu</div>
<div class="t" style="left:671.00px;top:685.30px;font-size:13px;color:#444;letter-spacing:-0.062px">rCon</div>
<div class="t" style="left:724.00px;top:685.30px;font-size:13px;color:#444;letter-spacing:-0.375px">rEst</div>
<div class="t" style="left:772.00px;top:685.30px;font-size:13px;color:#444;letter-spacing:-0.156px">rAna</div>
<div class="t" style="left:825.00px;top:685.30px;font-size:13px;color:#444;letter-spacing:0.000px">rImp</div>
<div class="t" style="left:567.20px;top:685.30px;font-size:13px;color:#217346;letter-spacing:-0.367px;font-weight:bold;-webkit-text-stroke:0">Agen</div>
</body></html>
